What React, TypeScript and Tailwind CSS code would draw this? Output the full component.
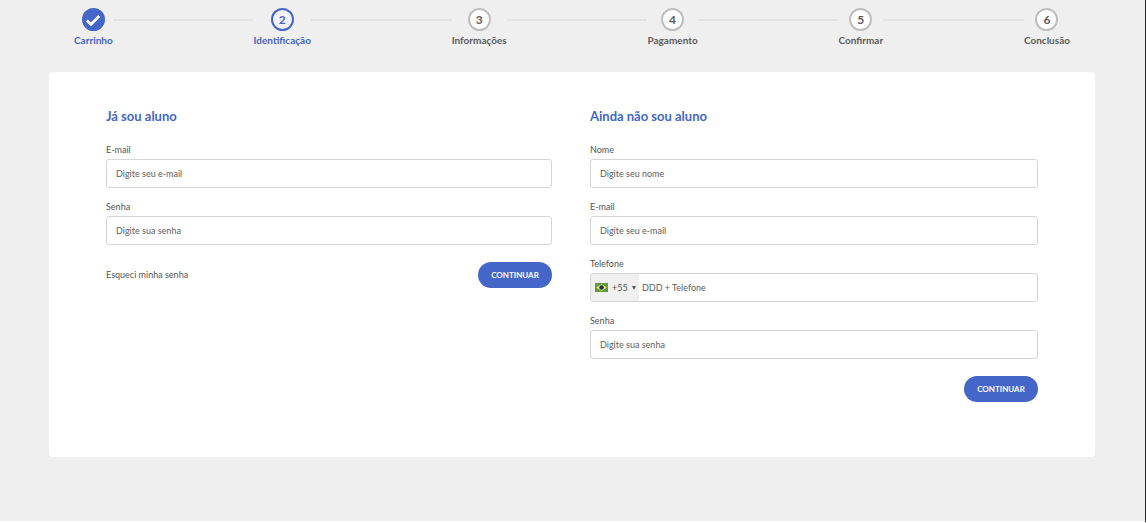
import { Fragment, useId } from "react";
import type { FormEvent } from "react";

type StepState = "done" | "current" | "todo";

const steps: { label: string; state: StepState }[] = [
  { label: "Carrinho", state: "done" },
  { label: "Identificação", state: "current" },
  { label: "Informações", state: "todo" },
  { label: "Pagamento", state: "todo" },
  { label: "Confirmar", state: "todo" },
  { label: "Conclusão", state: "todo" },
];

const circleStyles: Record<StepState, string> = {
  done: "border-[#4466c8] bg-[#4466c8] text-white",
  current: "border-[#4466c8] bg-[#f2f2f4] text-[#4466c8]",
  todo: "border-[#bebebe] bg-white text-[#5c5c5c]",
};

function CheckMark() {
  return (
    <svg viewBox="0 0 16 16" className="size-4 shrink-0" fill="none" stroke="currentColor" strokeWidth="2.8" aria-hidden="true">
      <path d="M1.8 8.4 6 12.4 14.2 4" />
    </svg>
  );
}

function Stepper() {
  return (
    <ol className="flex items-start pr-[75px] pl-[74px] pt-2">
      {steps.map((step, index) => (
        <Fragment key={step.label}>
          {index > 0 && <li aria-hidden="true" className="mt-[11px] h-0.5 flex-1 bg-[#e3e3e3]" />}
          <li
            aria-current={step.state === "current" ? "step" : undefined}
            className={
              step.state === "todo"
                ? "flex flex-col items-center gap-px text-[#5c5c5c]"
                : "flex flex-col items-center gap-px text-[#4466c8]"
            }
          >
            <span
              className={`flex size-[23px] items-center justify-center rounded-full border-2 text-[12px] leading-none font-bold ${circleStyles[step.state]}`}
            >
              {step.state === "done" ? <CheckMark /> : index + 1}
            </span>
            <span className="text-[10px] leading-4 font-bold">{step.label}</span>
          </li>
        </Fragment>
      ))}
    </ol>
  );
}

const inputStyles =
  "h-[29px] w-full rounded-[3px] border border-[#d5d5d5] bg-white px-[9px] text-[9px] text-[#555555] placeholder:text-[#606060] outline-none focus:border-[#4466c8]";

function Field({ label, type, placeholder }: { label: string; type: string; placeholder: string }) {
  const id = useId();
  return (
    <div className="flex flex-col">
      <label htmlFor={id} className="text-[9px] leading-[18px]">
        {label}
      </label>
      <input id={id} type={type} placeholder={placeholder} className={inputStyles} />
    </div>
  );
}

function BrazilFlag() {
  return (
    <svg viewBox="0 0 26 18" className="h-[9px] w-[13px] shrink-0" aria-hidden="true">
      <rect width="26" height="18" fill="#5c9a45" />
      <path d="M13 2 24 9 13 16 2 9Z" fill="#ecdf4b" />
      <circle cx="13" cy="9" r="4.4" fill="#1f3266" />
    </svg>
  );
}

function PhoneField() {
  const id = useId();
  return (
    <div className="flex flex-col">
      <label htmlFor={id} className="text-[9px] leading-[18px]">
        Telefone
      </label>
      <div className="flex h-[29px] overflow-hidden rounded-[3px] border border-[#d5d5d5] bg-white focus-within:border-[#4466c8]">
        <div className="flex w-12 shrink-0 items-center bg-[#f0f0f0] pl-1">
          <BrazilFlag />
          <select
            aria-label="Código do país"
            className="ml-1 h-full w-5 appearance-none bg-transparent text-[9px] outline-none"
          >
            <option>+55</option>
          </select>
          <svg viewBox="0 0 4 4" className="size-1" fill="#555555" aria-hidden="true">
            <path d="M0 0H4L2 4Z" />
          </svg>
        </div>
        <input
          id={id}
          type="tel"
          placeholder="DDD + Telefone"
          className="min-w-0 flex-1 px-[3px] text-[9px] placeholder:text-[#606060] outline-none"
        />
      </div>
    </div>
  );
}

function ContinueButton() {
  return (
    <button
      type="submit"
      className="h-[26px] w-[74px] rounded-full bg-[#4466c8] text-[8px] font-bold text-white hover:bg-[#3858b5]"
    >
      CONTINUAR
    </button>
  );
}

const stopSubmit = (event: FormEvent) => event.preventDefault();

export default function App() {
  return (
    <div className="flex min-h-screen flex-col border-r border-b-2 border-r-[#222629] border-b-white bg-[#efefef] font-['Lato',sans-serif] text-[#555555]">
      <Stepper />
      <main className="mt-6 mr-[50px] ml-[49px] grid grid-cols-[446fr_448fr] gap-[38px] rounded bg-white px-[57px] pt-[34px] pb-[55px]">
        <form onSubmit={stopSubmit} className="flex flex-col">
          <h2 className="text-[13px] leading-5 font-bold text-[#4466c8]">Já sou aluno</h2>
          <div className="mt-[15px] flex flex-col gap-2.5">
            <Field label="E-mail" type="email" placeholder="Digite seu e-mail" />
            <Field label="Senha" type="password" placeholder="Digite sua senha" />
          </div>
          <div className="mt-[17px] flex items-center justify-between">
            <a href="#recuperar" className="text-[9px] leading-[18px] hover:underline">
              Esqueci minha senha
            </a>
            <ContinueButton />
          </div>
        </form>
        <form onSubmit={stopSubmit} className="flex flex-col">
          <h2 className="text-[13px] leading-5 font-bold text-[#4466c8]">Ainda não sou aluno</h2>
          <div className="mt-[15px] flex flex-col gap-2.5">
            <Field label="Nome" type="text" placeholder="Digite seu nome" />
            <Field label="E-mail" type="email" placeholder="Digite seu e-mail" />
            <PhoneField />
            <Field label="Senha" type="password" placeholder="Digite sua senha" />
          </div>
          <div className="mt-[17px] flex justify-end">
            <ContinueButton />
          </div>
        </form>
      </main>
    </div>
  );
}
